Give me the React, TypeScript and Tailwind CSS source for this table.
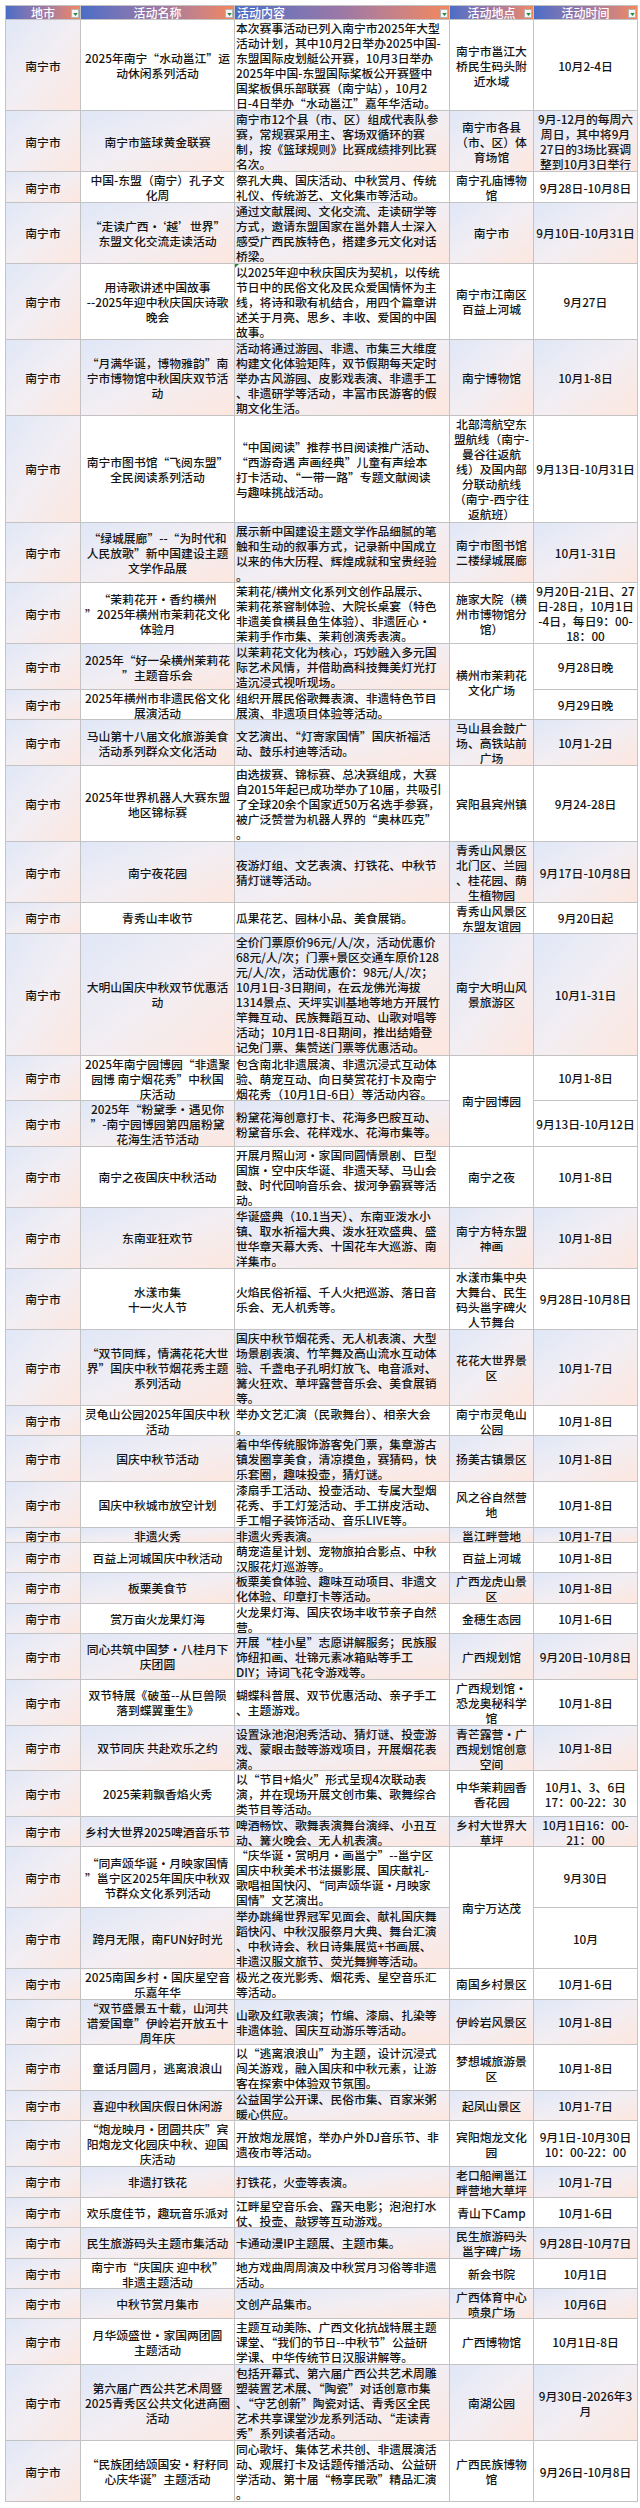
import React from 'react';

interface EventRow {
  lines: number;
  name: string;
  content: string;
  place?: string;
  placeSpan?: number;
  time: string;
  flag?: boolean;
}

const ROW_H: Record<number, string> = {
  1: 'h-[15.23px]',
  2: 'h-[30.46px]',
  3: 'h-[45.69px]',
  4: 'h-[60.92px]',
  5: 'h-[76.15px]',
  6: 'h-[91.38px]',
  7: 'h-[106.61px]',
  8: 'h-[121.84px]',
};

const ROWS: EventRow[] = [
  {
    lines: 6,
    name: '2025年南宁“水动邕江”运\n动休闲系列活动',
    content:
      '本次赛事活动已列入南宁市2025年大型\n活动计划，其中10月2日举办2025中国-\n东盟国际皮划艇公开赛，10月3日举办\n2025年中国-东盟国际桨板公开赛暨中\n国桨板俱乐部联赛（南宁站），10月2\n日-4日举办“水动邕江”嘉年华活动。',
    place: '南宁市邕江大\n桥民生码头附\n近水域',
    time: '10月2-4日',
  },
  {
    lines: 4,
    name: '南宁市篮球黄金联赛',
    content:
      '南宁市12个县（市、区）组成代表队参\n赛，常规赛采用主、客场双循环的赛\n制，按《篮球规则》比赛成绩排列比赛\n名次。',
    place: '南宁市各县\n（市、区）体\n育场馆',
    time: '9月-12月的每周六\n周日，其中将9月\n27日的3场比赛调\n整到10月3日举行',
  },
  {
    lines: 2,
    name: '中国-东盟（南宁）孔子文\n化周',
    content: '祭孔大典、国庆活动、中秋赏月、传统\n礼仪、传统游艺、文化集市等活动。',
    place: '南宁孔庙博物\n馆',
    time: '9月28日-10月8日',
  },
  {
    lines: 4,
    name: '“走读广西·‘越’世界”\n东盟文化交流走读活动',
    content:
      '通过文献展阅、文化交流、走读研学等\n方式，邀请东盟国家在邕外籍人士深入\n感受广西民族特色，搭建多元文化对话\n桥梁。',
    place: '南宁市',
    time: '9月10日-10月31日',
  },
  {
    lines: 5,
    name: '用诗歌讲述中国故事\n--2025年迎中秋庆国庆诗歌\n晚会',
    content:
      '以2025年迎中秋庆国庆为契机，以传统\n节日中的民俗文化及民众爱国情怀为主\n线，将诗和歌有机结合，用四个篇章讲\n述关于月亮、思乡、丰收、爱国的中国\n故事。',
    place: '南宁市江南区\n百益上河城',
    time: '9月27日',
    flag: true,
  },
  {
    lines: 5,
    name: '“月满华诞，博物雅韵”南\n宁市博物馆中秋国庆双节活\n动',
    content:
      '活动将通过游园、非遗、市集三大维度\n构建文化体验矩阵，双节假期每天定时\n举办古风游园、皮影戏表演、非遗手工\n、非遗研学等活动，丰富市民游客的假\n期文化生活。',
    place: '南宁博物馆',
    time: '10月1-8日',
  },
  {
    lines: 7,
    name: '南宁市图书馆“飞阅东盟”\n全民阅读系列活动',
    content:
      '“中国阅读”推荐书目阅读推广活动、\n“西游奇遇 声画经典”儿童有声绘本\n打卡活动、“一带一路”专题文献阅读\n与趣味挑战活动。',
    place: '北部湾航空东\n盟航线（南宁-\n曼谷往返航\n线）及国内部\n分联动航线\n（南宁-西宁往\n返航班）',
    time: '9月13日-10月31日',
  },
  {
    lines: 4,
    name: '“绿城展廊”--“为时代和\n人民放歌”新中国建设主题\n文学作品展',
    content:
      '展示新中国建设主题文学作品细腻的笔\n触和生动的叙事方式，记录新中国成立\n以来的伟大历程、辉煌成就和宝贵经验\n。',
    place: '南宁市图书馆\n二楼绿城展廊',
    time: '10月1-31日',
  },
  {
    lines: 4,
    name: '“茉莉花开·香约横州\n”2025年横州市茉莉花文化\n体验月',
    content:
      '茉莉花/横州文化系列文创作品展示、\n茉莉花茶窨制体验、大院长桌宴（特色\n非遗美食横县鱼生体验）、非遗匠心·\n茉莉手作市集、茉莉创演秀表演。',
    place: '施家大院（横\n州市博物馆分\n馆）',
    time: '9月20日-21日、27\n日-28日，10月1日\n-4日，每日9：00-\n18：00',
  },
  {
    lines: 3,
    name: '2025年“好一朵横州茉莉花\n”主题音乐会',
    content: '以茉莉花文化为核心，巧妙融入多元国\n际艺术风情，并借助高科技舞美灯光打\n造沉浸式视听现场。',
    place: '横州市茉莉花\n文化广场',
    placeSpan: 5,
    time: '9月28日晚',
  },
  {
    lines: 2,
    name: '2025年横州市非遗民俗文化\n展演活动',
    content: '组织开展民俗歌舞表演、非遗特色节目\n展演、非遗项目体验等活动。',
    time: '9月29日晚',
  },
  {
    lines: 3,
    name: '马山第十八届文化旅游美食\n活动系列群众文化活动',
    content: '文艺演出、“灯寄家国情”国庆祈福活\n动、鼓乐村迪等活动。',
    place: '马山县会鼓广\n场、高铁站前\n广场',
    time: '10月1-2日',
  },
  {
    lines: 5,
    name: '2025年世界机器人大赛东盟\n地区锦标赛',
    content:
      '由选拔赛、锦标赛、总决赛组成，大赛\n自2015年起已成功举办了10届，共吸引\n了全球20余个国家近50万名选手参赛，\n被广泛赞誉为机器人界的“奥林匹克”\n。',
    place: '宾阳县宾州镇',
    time: '9月24-28日',
  },
  {
    lines: 4,
    name: '南宁夜花园',
    content: '夜游灯组、文艺表演、打铁花、中秋节\n猜灯谜等活动。',
    place: '青秀山风景区\n北门区、兰园\n、桂花园、荫\n生植物园',
    time: '9月17日-10月8日',
  },
  {
    lines: 2,
    name: '青秀山丰收节',
    content: '瓜果花艺、园林小品、美食展销。',
    place: '青秀山风景区\n东盟友谊园',
    time: '9月20日起',
  },
  {
    lines: 8,
    name: '大明山国庆中秋双节优惠活\n动',
    content:
      '全价门票原价96元/人/次，活动优惠价\n68元/人/次；门票+景区交通车原价128\n元/人/次，活动优惠价：98元/人/次；\n10月1日-3日期间，在云龙佛光海拔\n1314景点、天坪实训基地等地方开展竹\n竿舞互动、民族舞蹈互动、山歌对唱等\n活动；10月1日-8日期间，推出结婚登\n记免门票、集赞送门票等优惠活动。',
    place: '南宁大明山风\n景旅游区',
    time: '10月1-31日',
  },
  {
    lines: 3,
    name: '2025年南宁园博园“非遗聚\n园博 南宁烟花秀”中秋国\n庆活动',
    content: '包含南北非遗展演、非遗沉浸式互动体\n验、萌宠互动、向日葵赏花打卡及南宁\n烟花秀（10月1日-6日）等活动内容。',
    place: '南宁园博园',
    placeSpan: 6,
    time: '10月1-8日',
  },
  {
    lines: 3,
    name: '2025年“粉黛季·遇见你\n”-南宁园博园第四届粉黛\n花海生活节活动',
    content: '粉黛花海创意打卡、花海多巴胺互动、\n粉黛音乐会、花样戏水、花海市集等。',
    time: '9月13日-10月12日',
  },
  {
    lines: 4,
    name: '南宁之夜国庆中秋活动',
    content: '开展月照山河·家国同圆情景剧、巨型\n国旗·空中庆华诞、非遗天琴、马山会\n鼓、时代回响音乐会、拔河争霸赛等活\n动。',
    place: '南宁之夜',
    time: '10月1-8日',
  },
  {
    lines: 4,
    name: '东南亚狂欢节',
    content: '华诞盛典（10.1当天）、东南亚泼水小\n镇、取水祈福大典、泼水狂欢盛典、盛\n世华章天幕大秀、十国花车大巡游、南\n洋集市。',
    place: '南宁方特东盟\n神画',
    time: '10月1-8日',
  },
  {
    lines: 4,
    name: '水漾市集\n十一火人节',
    content: '火焰民俗祈福、千人火把巡游、落日音\n乐会、无人机秀等。',
    place: '水漾市集中央\n大舞台、民生\n码头邕字碑火\n人节舞台',
    time: '9月28日-10月8日',
  },
  {
    lines: 5,
    name: '“双节同辉，情满花花大世\n界”国庆中秋节烟花秀主题\n系列活动',
    content:
      '国庆中秋节烟花秀、无人机表演、大型\n场景剧表演、竹竿舞及高山流水互动体\n验、千盏电子孔明灯放飞、电音派对、\n篝火狂欢、草坪露营音乐会、美食展销\n等。',
    place: '花花大世界景\n区',
    time: '10月1-7日',
  },
  {
    lines: 2,
    name: '灵龟山公园2025年国庆中秋\n活动',
    content: '举办文艺汇演（民歌舞台）、相亲大会\n。',
    place: '南宁市灵龟山\n公园',
    time: '10月1-8日',
  },
  {
    lines: 3,
    name: '国庆中秋节活动',
    content: '着中华传统服饰游客免门票，集章游古\n镇发圈享美食，清凉摸鱼，赛猜码，快\n乐套圈，趣味投壶，猜灯谜。',
    place: '扬美古镇景区',
    time: '10月1-8日',
  },
  {
    lines: 3,
    name: '国庆中秋城市放空计划',
    content: '漆扇手工活动、投壶活动、专属大型烟\n花秀、手工灯笼活动、手工拼皮活动、\n手工帽子装饰活动、音乐LIVE等。',
    place: '风之谷自然营\n地',
    time: '10月1-8日',
  },
  {
    lines: 1,
    name: '非遗火秀',
    content: '非遗火秀表演。',
    place: '邕江畔营地',
    time: '10月1-7日',
  },
  {
    lines: 2,
    name: '百益上河城国庆中秋活动',
    content: '萌宠造星计划、宠物旅拍合影点、中秋\n汉服花灯巡游等。',
    place: '百益上河城',
    time: '10月1-8日',
  },
  {
    lines: 2,
    name: '板栗美食节',
    content: '板栗美食体验、趣味互动项目、非遗文\n化体验、印章打卡等活动。',
    place: '广西龙虎山景\n区',
    time: '10月1-8日',
  },
  {
    lines: 2,
    name: '赏万亩火龙果灯海',
    content: '火龙果灯海、国庆农场丰收节亲子自然\n营。',
    place: '金穗生态园',
    time: '10月1-6日',
  },
  {
    lines: 3,
    name: '同心共筑中国梦·八桂月下\n庆团圆',
    content: '开展“桂小星”志愿讲解服务；民族服\n饰纽扣画、壮锦元素冰箱贴等手工\nDIY；诗词飞花令游戏等。',
    place: '广西规划馆',
    time: '9月20日-10月8日',
  },
  {
    lines: 3,
    name: '双节特展《破茧--从巨兽陨\n落到蝶翼重生》',
    content: '蝴蝶科普展、双节优惠活动、亲子手工\n、主题游戏。',
    place: '广西规划馆·\n恐龙奥秘科学\n馆',
    time: '10月1-8日',
  },
  {
    lines: 3,
    name: '双节同庆 共赴欢乐之约',
    content: '设置泳池泡泡秀活动、猜灯谜、投壶游\n戏、蒙眼击鼓等游戏项目，开展烟花表\n演。',
    place: '青芒露营·广\n西规划馆创意\n空间',
    time: '10月1-8日',
  },
  {
    lines: 3,
    name: '2025茉莉飘香焰火秀',
    content: '以“节目+焰火”形式呈现4次联动表\n演，并在现场开展文创市集、歌舞综合\n类节目等活动。',
    place: '中华茉莉园香\n香花园',
    time: '10月1、3、6日\n17：00-22：30',
  },
  {
    lines: 2,
    name: '乡村大世界2025啤酒音乐节',
    content: '啤酒畅饮、歌舞表演舞台演绎、小丑互\n动、篝火晚会、无人机表演。',
    place: '乡村大世界大\n草坪',
    time: '10月1日16：00-\n21：00',
  },
  {
    lines: 4,
    name: '“同声颂华诞·月映家国情\n”邕宁区2025年国庆中秋双\n节群众文化系列活动',
    content:
      '“庆华诞·赏明月·画邕宁”--邕宁区\n国庆中秋美术书法摄影展、国庆献礼-\n歌唱祖国快闪、“同声颂华诞·月映家\n国情”文艺演出。',
    place: '南宁万达茂',
    placeSpan: 8,
    time: '9月30日',
  },
  {
    lines: 4,
    name: '跨月无限，南FUN好时光',
    content:
      '举办跳绳世界冠军见面会、献礼国庆舞\n蹈快闪、中秋汉服祭月大典、舞台汇演\n、中秋诗会、秋日诗集展览+书画展、\n非遗汉服文旅节、荧光舞狮等活动。',
    time: '10月',
  },
  {
    lines: 2,
    name: '2025南国乡村·国庆星空音\n乐嘉年华',
    content: '极光之夜光影秀、烟花秀、星空音乐汇\n等活动。',
    place: '南国乡村景区',
    time: '10月1-6日',
  },
  {
    lines: 3,
    name: '“双节盛景五十载，山河共\n谱爱国章”伊岭岩开放五十\n周年庆',
    content: '山歌及红歌表演；竹编、漆扇、扎染等\n非遗体验、国庆互动游乐等活动。',
    place: '伊岭岩风景区',
    time: '10月1-8日',
  },
  {
    lines: 3,
    name: '童话月圆月，逃离浪浪山',
    content: '以“逃离浪浪山”为主题，设计沉浸式\n闯关游戏，融入国庆和中秋元素，让游\n客在探索中体验双节氛围。',
    place: '梦想城旅游景\n区',
    time: '10月1-8日',
  },
  {
    lines: 2,
    name: '喜迎中秋国庆假日休闲游',
    content: '公益国学公开课、民俗市集、百家米粥\n暖心供应。',
    place: '起凤山景区',
    time: '10月1-7日',
  },
  {
    lines: 3,
    name: '“炮龙映月·团圆共庆”宾\n阳炮龙文化园庆中秋、迎国\n庆活动',
    content: '开放炮龙展馆，举办户外DJ音乐节、非\n遗夜市等活动。',
    place: '宾阳炮龙文化\n园',
    time: '9月1日-10月30日\n10：00-22：00',
  },
  {
    lines: 2,
    name: '非遗打铁花',
    content: '打铁花，火壶等表演。',
    place: '老口船闸邕江\n畔营地大草坪',
    time: '10月1-7日',
  },
  {
    lines: 2,
    name: '欢乐度佳节，趣玩音乐派对',
    content: '江畔星空音乐会、露天电影；泡泡打水\n仗、投壶、敲锣等互动游戏。',
    place: '青山下Camp',
    time: '10月1-6日',
  },
  {
    lines: 2,
    name: '民生旅游码头主题市集活动',
    content: '卡通动漫IP主题展、主题市集。',
    place: '民生旅游码头\n邕字碑广场',
    time: '9月28日-10月7日',
  },
  {
    lines: 2,
    name: '南宁市“庆国庆 迎中秋”\n非遗主题活动',
    content: '地方戏曲周周演及中秋赏月习俗等非遗\n活动。',
    place: '新会书院',
    time: '10月1日',
  },
  {
    lines: 2,
    name: '中秋节赏月集市',
    content: '文创产品集市。',
    place: '广西体育中心\n喷泉广场',
    time: '10月6日',
  },
  {
    lines: 3,
    name: '月华颂盛世·家国两团圆\n主题活动',
    content: '主题互动美陈、广西文化抗战特展主题\n课堂、“我们的节日--中秋节”公益研\n学课、中华传统节日汉服讲解等。',
    place: '广西博物馆',
    time: '10月1日-8日',
  },
  {
    lines: 5,
    name: '第六届广西公共艺术周暨\n2025青秀区公共文化进商圈\n活动',
    content:
      '包括开幕式、第六届广西公共艺术周雕\n塑装置艺术展、“陶瓷”对话创意市集\n、“守艺创新”陶瓷对话、青秀区全民\n艺术共享课堂沙龙系列活动、“走读青\n秀”系列读者活动。',
    place: '南湖公园',
    time: '9月30日-2026年3\n月',
  },
  {
    lines: 4,
    name: '“民族团结颂国安•籽籽同\n心庆华诞”主题活动',
    content:
      '同心歌圩、集体艺术共创、非遗展演活\n动、观展打卡及话题传播活动、公益研\n学活动、第十届“畅享民歌”精品汇演\n。',
    place: '广西民族博物\n馆',
    time: '9月26日-10月8日',
  },
];

const CELL =
  'relative flex flex-col overflow-hidden border-r border-b border-[#c3c3c3] [justify-content:safe_center]';
const SHADE = 'bg-linear-to-br from-[#e0e7f7] via-[#f2eef3] to-[#fde7df]';
const HEAD =
  'relative flex h-[15px] items-center border-r border-t border-b border-[#c3c3c3] bg-linear-to-r from-[#4a6dc7] via-[#9c78a6] to-[#f4875a] text-[12px] leading-[15px] text-white';

function FilterButton() {
  return (
    <span className="absolute right-[1px] bottom-[1px] flex h-[9px] w-[8px] items-end justify-center border border-[#b5b5b5] bg-[#f5f5f5]">
      <svg viewBox="0 0 6 4" className="mb-[1px] h-[3px] w-[5px]">
        <path d="M0 0h6L3 4z" fill="#1f8b3f" />
      </svg>
    </span>
  );
}

function Text({ children }: { children: string }) {
  return <div className="whitespace-pre leading-[15px]">{children}</div>;
}

export default function App() {
  return (
    <div className="min-h-[2508px] bg-white pt-[5px] pl-[5px] font-['Noto_Sans_CJK_SC','Noto_Sans',sans-serif] text-[11.8px] font-medium text-[#141414]">
      <div className="grid w-[633px] grid-cols-[76px_154px_215px_84px_104px]">
        <div className={`${HEAD} justify-center border-l`}>
          地市
          <FilterButton />
        </div>
        <div className={`${HEAD} justify-center`}>
          活动名称
          <FilterButton />
        </div>
        <div className={`${HEAD} pl-[2px]`}>
          活动内容
          <FilterButton />
        </div>
        <div className={`${HEAD} justify-center`}>
          活动地点
          <FilterButton />
        </div>
        <div className={`${HEAD} justify-center`}>
          活动时间
          <FilterButton />
        </div>

        {ROWS.map((row, i) => {
          const h = ROW_H[row.lines];
          const bg = i % 2 === 1 ? SHADE : 'bg-white';
          const nextToMerge = row.placeSpan || (i > 0 && ROWS[i - 1].placeSpan);
          return (
            <React.Fragment key={i}>
              <div className={`${CELL} ${SHADE} ${h} border-l text-center`}>
                <Text>南宁市</Text>
              </div>
              <div className={`${CELL} ${bg} ${h} text-center`}>
                <Text>{row.name}</Text>
              </div>
              <div className={`${CELL} ${bg} ${h} pl-[1px] text-left`}>
                {row.flag && (
                  <span className="absolute top-0 left-0 h-0 w-0 border-t-[4px] border-r-[4px] border-t-[#1f8b3f] border-r-transparent" />
                )}
                <Text>{row.content}</Text>
              </div>
              {row.place !== undefined &&
                (row.placeSpan ? (
                  <div className={`${CELL} row-span-2 bg-white ${ROW_H[row.placeSpan]} text-center`}>
                    <Text>{row.place}</Text>
                  </div>
                ) : (
                  <div className={`${CELL} ${bg} ${h} text-center`}>
                    <Text>{row.place}</Text>
                  </div>
                ))}
              <div className={`${CELL} ${nextToMerge ? 'bg-white' : bg} ${h} text-center`}>
                <Text>{row.time}</Text>
              </div>
            </React.Fragment>
          );
        })}
      </div>
    </div>
  );
}
